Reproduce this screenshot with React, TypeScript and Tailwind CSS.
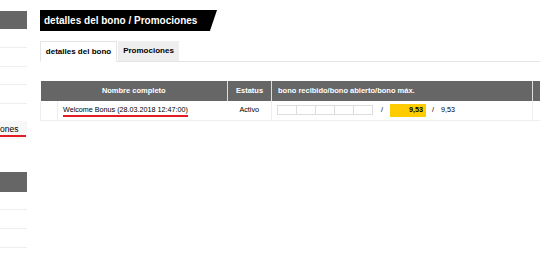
const segments = [0, 1, 2, 3, 4];

export default function App() {
  return (
    <div className="flex h-[272px] w-[540px] overflow-hidden bg-white font-['Liberation_Sans',Arial,sans-serif] text-black">
      {/* sidebar */}
      <div className="w-[27px] shrink-0 pt-[11px]">
        <div className="h-[18px] bg-[#666]"></div>
        <div className="h-[19px] border-b border-[#eee]"></div>
        <div className="h-[19px] border-b border-[#eee]"></div>
        <div className="h-[18px] border-b border-[#eee]"></div>
        <div className="h-[19px] border-b border-[#eee]"></div>
        <div className="mt-[17px] flex h-[18px] items-center bg-[#f7f7f7] pt-[2px] text-[8.5px] leading-none">
          <span className="border-b-2 border-[#e31b23] pb-[1px] pr-[8px]">ones</span>
        </div>
        <div className="mt-[33px] h-[20px] bg-[#666]"></div>
        <div className="h-[18px] border-b border-[#eee]"></div>
        <div className="h-[19px] border-b border-[#eee]"></div>
        <div className="h-[19px] border-b border-[#eee]"></div>
      </div>

      {/* main */}
      <div className="ml-[13px] flex-1 pt-[10px]">
        <div className="flex h-[21px] w-[177px] items-center whitespace-nowrap bg-black pl-[4px] text-[10px] font-bold text-white [clip-path:polygon(0_0,100%_0,96%_100%,0_100%)]">
          detalles del bono / Promociones
        </div>

        <div className="mt-[10px] flex h-[21px] items-end border-b border-[#e5e5e5]">
          <div className="-mb-px flex h-[21px] w-[77px] items-center justify-center border border-b-white border-[#e5e5e5] bg-white text-[8px] font-bold">
            detalles del bono
          </div>
          <div className="ml-px flex h-[20px] w-[61px] items-center justify-center bg-[#eee] text-[8px] font-bold">
            Promociones
          </div>
        </div>

        <table className="mt-[19px] w-[510px] table-fixed border-collapse text-[7.2px]">
          <colgroup>
            <col className="w-[17px]" />
            <col className="w-[170px]" />
            <col className="w-[44px]" />
            <col className="w-[261px]" />
            <col />
          </colgroup>
          <thead>
            <tr className="h-[20px] bg-[#666] text-[7.5px] text-white">
              <th colSpan={2} className="border-r border-[#ddd] font-bold">Nombre completo</th>
              <th className="border-r border-[#ddd] font-bold">Estatus</th>
              <th className="border-r border-[#ddd] pl-[6px] text-left font-bold">bono recibido/bono abierto/bono máx.</th>
              <th></th>
            </tr>
          </thead>
          <tbody>
            <tr className="h-[19px] border-b border-[#eee]">
              <td className="border-r border-l border-[#eee]"></td>
              <td className="whitespace-nowrap pl-[5px]">
                <span className="border-b-2 border-[#e31b23] pb-[1px]">Welcome Bonus (28.03.2018 12:47:00)</span>
              </td>
              <td className="text-center">Activo</td>
              <td className="border-l border-[#eee] pl-[5px]">
                <div className="flex items-center">
                  <div className="flex h-[10px] w-[96px] border border-[#ddd]">
                    {segments.map((s) => (
                      <div key={s} className="flex-1 border-r border-[#ddd] last:border-r-0"></div>
                    ))}
                  </div>
                  <span className="ml-[8px]">/</span>
                  <div className="ml-[7px] flex h-[13px] w-[36px] items-center justify-end bg-[#ffcc00] pr-[3px] font-bold">9,53</div>
                  <span className="ml-[6px]">/</span>
                  <span className="ml-[7px]">9,53</span>
                </div>
              </td>
              <td className="border-l border-[#eee]"></td>
            </tr>
          </tbody>
        </table>
      </div>
    </div>
  );
}
